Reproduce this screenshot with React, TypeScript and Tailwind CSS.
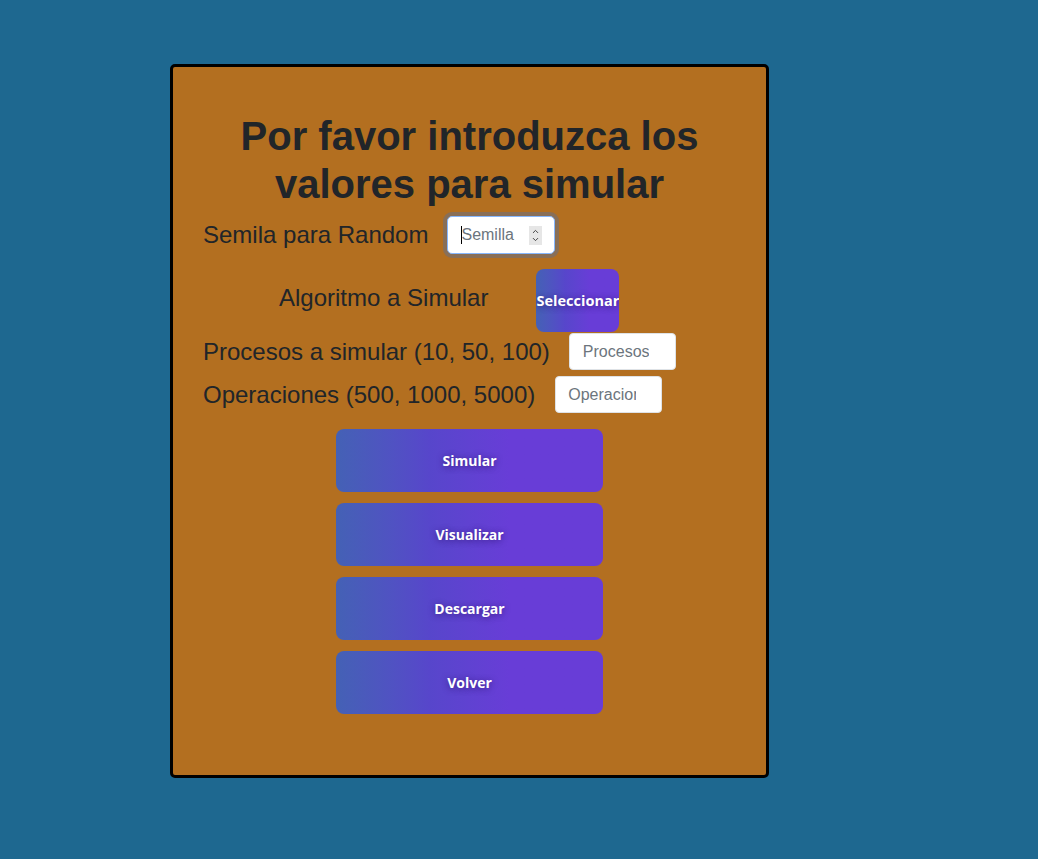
import { ChevronUp, ChevronDown } from 'lucide-react'

const actions = ['Simular', 'Visualizar', 'Descargar', 'Volver']

const gradientBtn =
  'bg-linear-to-r from-[#4461b5] via-[#5746cb] via-35% to-[#683dd7] to-65% text-white font-bold [font-family:"Open_Sans","Noto_Sans",sans-serif] [text-shadow:0_1px_6px_rgba(45,20,110,0.75)]'

const label = 'text-[24px] leading-[36px] text-[#212529] whitespace-nowrap'

export default function App() {
  return (
    <div className="min-h-screen bg-[#1e6890] pt-[64px] pl-[170px] [font-family:'Liberation_Sans',Arial,sans-serif]">
      <div className="w-[599px] h-[714px] border-[3px] border-black rounded-[5px] bg-[#b36f20] pt-[45px]">
        {/* Title */}
        <h1 className="text-center text-[40px] leading-[48px] font-bold text-[#212529] px-[40px]">
          Por favor introduzca los valores para simular
        </h1>

        <div className="pl-[30px] mt-[8px]">
          {/* Seed */}
          <div className="flex items-center h-[38px]">
            <span className={label}>Semila para Random</span>
            <div className="ml-[19px] w-[108px] h-[38px] rounded-[5px] border border-[#86b7fe] bg-white shadow-[0_0_0_4px_#896f57] flex items-center pl-[13px] pr-[12px]">
              <span className="w-px h-[18px] bg-black" />
              <span className="text-[16px] text-[#6c757d] -ml-px">Semilla</span>
              <span className="ml-auto w-[13px] h-[19px] bg-[#e6e6e6] flex flex-col items-center justify-center text-[#3a3a3a]">
                <ChevronUp className="w-[11px] h-[9px] -mb-[1px]" strokeWidth={2.5} />
                <ChevronDown className="w-[11px] h-[9px]" strokeWidth={2.5} />
              </span>
            </div>
          </div>

          {/* Algorithm */}
          <div className="flex items-center mt-[15px] pl-[76px]">
            <span className={label + ' -mt-[5px]'}>Algoritmo a Simular</span>
            <button
              type="button"
              className={'ml-[48px] w-[83px] h-[63px] rounded-lg overflow-hidden flex items-center justify-center whitespace-nowrap text-[14.5px] ' + gradientBtn}
            >
              Seleccionar
            </button>
          </div>

          {/* Processes */}
          <div className="flex items-center mt-[1px]">
            <span className={label}>Procesos a simular (10, 50, 100)</span>
            <input
              placeholder="Procesos"
              className="ml-[19px] w-[107px] h-[37px] rounded-[4px] border border-[#dee2e6] bg-white pl-[13px] pr-[26px] text-[16px] placeholder:text-[#6c757d] outline-none"
            />
          </div>

          {/* Operations */}
          <div className="flex items-center mt-[6px]">
            <span className={label}>Operaciones (500, 1000, 5000)</span>
            <input
              placeholder="Operaciones"
              className="ml-[20px] w-[107px] h-[37px] rounded-[4px] border border-[#dee2e6] bg-white pl-[12px] pr-[25px] text-[16px] placeholder:text-[#6c757d] outline-none"
            />
          </div>
        </div>

        {/* Actions */}
        <div className="flex flex-col items-center gap-[11px] mt-[16px]">
          {actions.map((a) => (
            <button
              key={a}
              type="button"
              className={'w-[267px] h-[63px] rounded-lg flex items-center justify-center text-[14px] ' + gradientBtn}
            >
              {a}
            </button>
          ))}
        </div>
      </div>
    </div>
  )
}
